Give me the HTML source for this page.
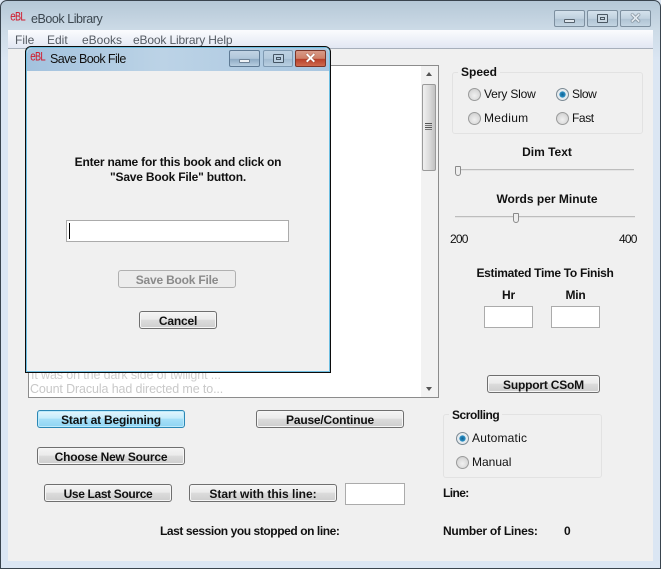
<!DOCTYPE html>
<html><head><meta charset="utf-8">
<style>
html,body{margin:0;padding:0;background:#fff}
#w{position:relative;width:661px;height:569px;overflow:hidden;font:12px "Liberation Sans",sans-serif;color:#111;background:#dbe6f3}
#w div{position:absolute;box-sizing:border-box}
.t{white-space:nowrap;line-height:14px}
.b{font-weight:bold;color:#111;letter-spacing:-.2px}
.c{text-align:center}
.btn{border:1px solid #6f6f6f;border-radius:3px;background:linear-gradient(#f4f4f4 0,#ebebeb 45%,#dcdcdc 50%,#cdcdcd 100%);text-align:center;font-weight:bold;line-height:18px;letter-spacing:-.2px;color:#111;box-shadow:inset 0 0 0 1px #f6f6f6}
.in{background:#fff;border:1px solid #ababab}
.wb{border:1px solid #7d8f9f;border-radius:2px;background:linear-gradient(#d4e1ec,#c0d1df 50%,#b0c4d4 55%,#c4d5e2)}
.grp{border:1px solid #e2e2e2;border-radius:3px}
.r{width:13px;height:13px;border-radius:50%;border:1px solid #9a9b9b;background:radial-gradient(circle at 50% 60%,#f0f0f0 0,#dcdcdc 55%,#c4c4c4 100%)}
.r.on{background:radial-gradient(circle,#0f5f92 0,#2b8fc4 36%,#e8eef2 44%,#dfe3e6 100%);border-color:#7c8a94}
.i{color:#d01e30;font-size:10px;letter-spacing:-1px;font-family:'Liberation Mono',monospace;transform:scaleY(1.3);transform-origin:left center}
</style></head><body>
<div id="w">
<!-- main window frame -->
<div style="left:0;top:0;width:661px;height:569px;border:1px solid #39444e;border-radius:7px 7px 0 0;background:linear-gradient(#b5c8d7 0,#cddbe7 30px,#dbe6f3 60px)"></div>
<div class="t i" style="left:10px;top:12px">eBL</div>
<div class="t" style="left:31px;top:12px;color:#3c4750;font-size:12.5px;letter-spacing:-.45px">eBook Library</div>
<div class="wb" style="left:554px;top:10px;width:31px;height:17px"></div>
<div style="left:564px;top:19px;width:11px;height:4px;border:1px solid #56626d;border-radius:1px;background:#dfe7ee"></div>
<div class="wb" style="left:587px;top:10px;width:31px;height:17px"></div>
<div style="left:597px;top:14px;width:11px;height:9px;border:1px solid #4b5863;border-radius:1px;background:#cad8e3;box-shadow:inset 0 0 0 2px #cad8e3,inset 0 0 0 3px #4b5863"></div>
<div class="wb" style="left:620px;top:10px;width:31px;height:17px"></div>
<div class="t c" style="left:620px;top:11px;width:31px;font-weight:bold;font-size:14px;color:#dfe7ee;text-shadow:0 0 1px #2f3b45,0 0 1px #2f3b45">✕</div>
<!-- menu -->
<div style="left:8px;top:30px;width:645px;height:19px;background:linear-gradient(#fbfcfe,#e2e7f3);border-bottom:1px solid #a7afbb"></div>
<div class="t" style="left:15px;top:33px;color:#555b63;font-size:12px">File</div>
<div class="t" style="left:47px;top:33px;color:#555b63;font-size:12px">Edit</div>
<div class="t" style="left:82px;top:33px;color:#555b63;font-size:12px">eBooks</div>
<div class="t" style="left:133px;top:33px;color:#555b63;font-size:12px;letter-spacing:-.15px">eBook Library Help</div>
<!-- client -->
<div style="left:8px;top:49px;width:645px;height:512px;background:#f0f0f0"></div>
<!-- text box -->
<div style="left:28px;top:65px;width:411px;height:333px;background:#fff;border:1px solid #8c8c8c;overflow:hidden">
<div class="t" style="left:2px;top:302px;color:#cfcfcf;font-size:12.5px;letter-spacing:-.12px">It was on the dark side of twilight ...</div>
<div class="t" style="left:1px;top:316px;color:#c8c8c8;font-size:12.5px;letter-spacing:-.12px">Count Dracula had directed me to...</div>
<div style="right:0;top:0;width:17px;height:331px;background:#f2f2f2"></div>
<div style="left:393px;top:18px;width:14px;height:87px;border:1px solid #9a9a9a;border-radius:2px;background:linear-gradient(90deg,#f0f0f0,#dcdcdc 50%,#c2c2c2)"></div>
<div style="left:396px;top:57px;width:7px;height:1px;background:#555;box-shadow:0 2px 0 #777,0 4px 0 #555,0 6px 0 #777"></div>
<div style="left:397px;top:6px;width:0;height:0;border:3.5px solid transparent;border-top:0;border-bottom:4px solid #555"></div>
<div style="left:397px;top:321px;width:0;height:0;border:3.5px solid transparent;border-bottom:0;border-top:4px solid #555"></div>
</div>
<!-- speed -->
<div class="grp" style="left:452px;top:72px;width:191px;height:62px"></div>
<div class="t b" style="left:458px;top:65px;padding:0 3px;background:#f0f0f0;letter-spacing:0">Speed</div>
<div class="r" style="left:468px;top:88px"></div><div class="t" style="left:484px;top:87px;letter-spacing:-.2px">Very Slow</div>
<div class="r on" style="left:556px;top:88px"></div><div class="t" style="left:572px;top:87px;letter-spacing:-.4px">Slow</div>
<div class="r" style="left:468px;top:112px"></div><div class="t" style="left:484px;top:111px;letter-spacing:.3px">Medium</div>
<div class="r" style="left:556px;top:112px"></div><div class="t" style="left:572px;top:111px;letter-spacing:-.4px">Fast</div>
<!-- sliders -->
<div class="t b c" style="left:447px;top:145px;width:200px;letter-spacing:0">Dim Text</div>
<div style="left:455px;top:169px;width:179px;height:2px;background:#bdbdbd;border-bottom:1px solid #e4e4e4"></div>
<div style="left:455px;top:166px;width:6px;height:10px;background:#eee;border:1px solid #8a8a8a;border-radius:1px 1px 3px 3px"></div>
<div class="t b c" style="left:447px;top:192px;width:200px;letter-spacing:0">Words per Minute</div>
<div style="left:455px;top:216px;width:180px;height:2px;background:#bdbdbd;border-bottom:1px solid #e4e4e4"></div>
<div style="left:513px;top:213px;width:6px;height:10px;background:#eee;border:1px solid #8a8a8a;border-radius:1px 1px 3px 3px"></div>
<div class="t" style="left:450px;top:232px;letter-spacing:-.8px">200</div>
<div class="t" style="left:619px;top:232px;letter-spacing:-.8px">400</div>
<div class="t b c" style="left:445px;top:266px;width:200px;letter-spacing:-.3px">Estimated Time To Finish</div>
<div class="t b c" style="left:484px;top:288px;width:49px">Hr</div>
<div class="t b c" style="left:551px;top:288px;width:49px">Min</div>
<div class="in" style="left:484px;top:306px;width:49px;height:22px"></div>
<div class="in" style="left:551px;top:306px;width:49px;height:22px"></div>
<div class="btn" style="left:487px;top:375px;width:113px;height:18px">Support CSoM</div>
<!-- scrolling -->
<div class="grp" style="left:443px;top:414px;width:159px;height:64px"></div>
<div class="t b" style="left:449px;top:408px;padding:0 3px;background:#f0f0f0;letter-spacing:-.45px">Scrolling</div>
<div class="r on" style="left:456px;top:432px"></div><div class="t" style="left:472px;top:431px;letter-spacing:.2px">Automatic</div>
<div class="r" style="left:456px;top:456px"></div><div class="t" style="left:472px;top:455px">Manual</div>
<div class="t b" style="left:443px;top:486px;letter-spacing:-.6px">Line:</div>
<div class="t b" style="left:443px;top:524px;letter-spacing:-.25px">Number of Lines:</div>
<div class="t b" style="left:564px;top:524px">0</div>
<!-- bottom buttons -->
<div class="btn" style="left:37px;top:410px;width:148px;height:18px;border-color:#2b87b5;background:linear-gradient(#e4f6fd,#c6ecfb 45%,#a6e0f8 50%,#8fd4f3);box-shadow:inset 0 0 0 1px #bdeafb">Start at Beginning</div>
<div class="btn" style="left:256px;top:410px;width:148px;height:18px">Pause/Continue</div>
<div class="btn" style="left:37px;top:447px;width:148px;height:18px">Choose New Source</div>
<div class="btn" style="left:44px;top:484px;width:128px;height:18px;letter-spacing:-.35px">Use Last Source</div>
<div class="btn" style="left:189px;top:484px;width:148px;height:18px;letter-spacing:0">Start with this line:</div>
<div class="in" style="left:345px;top:483px;width:60px;height:22px"></div>
<div class="t b" style="left:160px;top:524px;letter-spacing:-.42px">Last session you stopped on line:</div>
<!-- dialog -->
<div style="left:25px;top:46px;width:306px;height:327px;background:#f0f0f0;border:1px solid #0c0c0c;border-radius:6px 6px 0 0;box-shadow:inset 0 0 0 1px #6fbfe2;overflow:hidden">
<div style="left:1px;top:1px;width:302px;height:23px;background:linear-gradient(90deg,#a3c2de,#bcd3e6 45%,#a9c6e0);border-radius:5px 5px 0 0"></div>
</div>
<div class="t i" style="left:30px;top:52px">eBL</div>
<div class="t" style="left:50px;top:52px;color:#111;font-size:12.5px;letter-spacing:-.6px">Save Book File</div>
<div class="wb" style="left:229px;top:50px;width:31px;height:17px;border-color:#5f7a94;background:linear-gradient(#c2d4e4,#b0c6da 50%,#8fabc4 55%,#b7cde0)"></div>
<div style="left:239px;top:59px;width:11px;height:4px;background:#eef2f6;border:1px solid #6d8195;border-radius:1px"></div>
<div class="wb" style="left:263px;top:50px;width:30px;height:17px;border-color:#7f9ab2;background:linear-gradient(#bed2e3,#b4cadd 50%,#a3bcd2 55%,#b9cfe1)"></div>
<div style="left:273px;top:54px;width:11px;height:9px;border:1px solid #455564;border-radius:1px;box-shadow:inset 0 0 0 2px #bcd0e1,inset 0 0 0 3px #455564"></div>
<div class="wb" style="left:295px;top:50px;width:31px;height:17px;border-color:#7b3528;background:linear-gradient(#d89a88,#cf7f68 50%,#b8402a 55%,#cf6a4e)"></div>
<div class="t c" style="left:295px;top:51px;width:31px;font-weight:bold;font-size:14px;color:#fff;text-shadow:0 0 1px #5a2015">✕</div>
<div class="t b c" style="left:27px;top:155px;width:302px;line-height:15px;white-space:normal">Enter name for this book and click on<br>"Save Book File" button.</div>
<div class="in" style="left:66px;top:220px;width:223px;height:22px"></div>
<div style="left:69px;top:223px;width:1px;height:16px;background:#000"></div>
<div class="btn" style="left:118px;top:270px;width:118px;height:18px;border-color:#b0b0b0;background:#ececec;box-shadow:none;color:#8a8a8a">Save Book File</div>
<div class="btn" style="left:139px;top:311px;width:78px;height:18px">Cancel</div>
</div>
</body></html>
